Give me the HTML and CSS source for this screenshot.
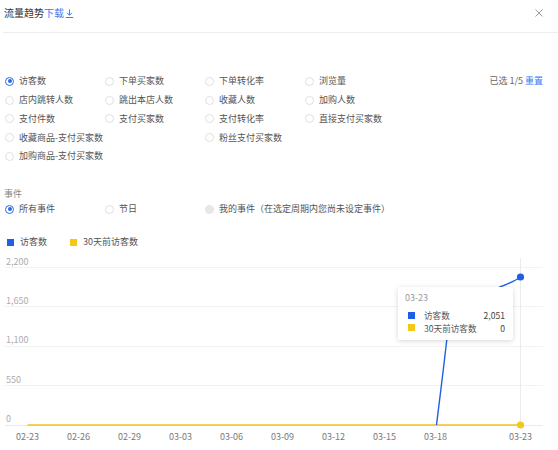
FILE: index.html
```html
<!DOCTYPE html>
<html lang="zh-CN">
<head>
<meta charset="utf-8">
<title>流量趋势</title>
<link rel="stylesheet" href="styles.css">
</head>
<body>
<div class="dialog">
  <header class="head">
    <div class="title">流量趋势<a class="dl">下载<svg class="dl-icon" width="9" height="9" viewBox="0 0 9 9"><path d="M4.5 0.5V6M2 3.8L4.5 6.3L7 3.8M0.8 8.5H8.2" fill="none" stroke="currentColor" stroke-width="1"/></svg></a></div>
    <span class="close"><svg width="8" height="8" viewBox="0 0 8 8"><path d="M0.5 0.5L7.5 7.5M7.5 0.5L0.5 7.5" stroke="#9a9a9a" stroke-width="1"/></svg></span>
  </header>

  <div class="metrics">
    <label class="opt on"><i class="radio"></i>访客数</label>
    <label class="opt"><i class="radio"></i>下单买家数</label>
    <label class="opt"><i class="radio"></i>下单转化率</label>
    <label class="opt"><i class="radio"></i>浏览量</label>
    <div class="picked">已选 1/5 <a class="link">重置</a></div>
    <label class="opt"><i class="radio"></i>店内跳转人数</label>
    <label class="opt"><i class="radio"></i>跳出本店人数</label>
    <label class="opt"><i class="radio"></i>收藏人数</label>
    <label class="opt"><i class="radio"></i>加购人数</label>
    <label class="opt"><i class="radio"></i>支付件数</label>
    <label class="opt"><i class="radio"></i>支付买家数</label>
    <label class="opt"><i class="radio"></i>支付转化率</label>
    <label class="opt"><i class="radio"></i>直接支付买家数</label>
    <label class="opt span2"><i class="radio"></i>收藏商品-支付买家数</label>
    <label class="opt"><i class="radio"></i>粉丝支付买家数</label>
    <label class="opt span2"><i class="radio"></i>加购商品-支付买家数</label>
  </div>

  <div class="ev-label">事件</div>
  <div class="events">
    <label class="opt on"><i class="radio"></i>所有事件</label>
    <label class="opt"><i class="radio"></i>节日</label>
    <label class="opt off wide"><i class="radio"></i>我的事件（在选定周期内您尚未设定事件）</label>
  </div>

  <div class="legend">
    <span class="lg-item"><i class="sw blue"></i>访客数</span>
    <span class="lg-item"><i class="sw yellow"></i>30天前访客数</span>
  </div>

  <div class="chart">
    <svg class="plot" width="558" height="200" viewBox="0 0 558 200">
      <g stroke="#f2f2f4" stroke-width="1">
        <line x1="5" x2="543" y1="17.5" y2="17.5"/>
        <line x1="5" x2="543" y1="56.5" y2="56.5"/>
        <line x1="5" x2="543" y1="96.5" y2="96.5"/>
        <line x1="5" x2="543" y1="135.5" y2="135.5"/>
        <line x1="5" x2="543" y1="175.5" y2="175.5" stroke="#eaeaea"/>
      </g>
      <g class="ylab" fill="#acacac" font-size="9">
        <text x="6" y="14.5">2,200</text>
        <text x="6" y="53.5">1,650</text>
        <text x="6" y="93">1,100</text>
        <text x="6" y="132.5">550</text>
        <text x="6" y="172">0</text>
      </g>
      <line x1="520.5" x2="520.5" y1="8" y2="175" stroke="#ececec" stroke-width="1"/>
      <path d="M27.5 175H520.5" stroke="#f0c31c" stroke-width="1.6" fill="none"/>
      <path d="M436.5 175C442 130 446 100 450 60C470 45 508 37 520.5 27" stroke="#1e5fe4" stroke-width="1.4" fill="none"/>
      <circle cx="520.5" cy="175" r="3.6" fill="#f4c818"/>
      <circle cx="520.5" cy="27" r="3.6" fill="#1e5fe4"/>
      <g class="xlab" fill="#7a7a7a" font-size="9" text-anchor="middle">
        <text x="27.5" y="190">02-23</text>
        <text x="78.5" y="190">02-26</text>
        <text x="129.5" y="190">02-29</text>
        <text x="180.5" y="190">03-03</text>
        <text x="231.5" y="190">03-06</text>
        <text x="282.5" y="190">03-09</text>
        <text x="333.5" y="190">03-12</text>
        <text x="384.5" y="190">03-15</text>
        <text x="435.5" y="190">03-18</text>
        <text x="520.5" y="190">03-23</text>
      </g>
    </svg>
    <div class="tip">
      <div class="tip-date">03-23</div>
      <div class="tip-row first"><i class="sw blue"></i><span class="tip-name">访客数</span><span class="val">2,051</span></div>
      <div class="tip-row"><i class="sw yellow"></i><span class="tip-name">30天前访客数</span><span class="val">0</span></div>
    </div>
  </div>
</div>
</body>
</html>
```
FILE: styles.css
```css
html, body {
  margin: 0;
  padding: 0;
  background: #fff;
}
body {
  font-family: "Noto Sans CJK SC", "Noto Sans", sans-serif;
  font-size: 9px;
  color: #555;
}
.dialog {
  width: 558px;
  height: 450px;
  overflow: hidden;
}
.head {
  height: 33px;
  box-sizing: border-box;
  margin-left: 3px;
  padding: 7px 15px 0 1px;
  border-bottom: 1px solid #ededed;
  display: flex;
  justify-content: space-between;
  align-items: flex-start;
}
.title {
  font-size: 10px;
  line-height: 12px;
  color: #333;
  display: flex;
  align-items: center;
}
.dl {
  color: #3a7cf0;
  display: inline-flex;
  align-items: center;
}
.dl-icon {
  margin-left: 1px;
}
.close {
  display: block;
  margin-top: 2px;
  width: 8px;
  height: 8px;
}
.close svg {
  display: block;
}
.metrics {
  display: grid;
  grid-template-columns: repeat(4, 100px) 1fr;
  grid-auto-rows: 18.75px;
  align-items: center;
  margin: 39px 15px 0 4px;
}
.opt {
  display: flex;
  align-items: center;
  line-height: 12px;
  white-space: nowrap;
  color: #555;
}
.radio {
  display: block;
  flex: none;
  position: relative;
  width: 9px;
  height: 9px;
  box-sizing: border-box;
  border: 1px solid #e0e0e0;
  border-radius: 50%;
  margin: 0 5px 0 1px;
}
.opt.on .radio {
  border-color: #2d6be6;
}
.opt.on .radio::after {
  content: "";
  position: absolute;
  inset: 1.5px;
  border-radius: 50%;
  background: #2d6be6;
}
.opt.off .radio {
  background: #e8e8e8;
  border-color: #e4e4e4;
}
.span2 {
  grid-column: span 2;
}
.picked {
  grid-column: 5;
  grid-row: 1 / span 5;
  align-self: start;
  justify-self: end;
  line-height: 18.75px;
  color: #666;
}
.link {
  color: #3a7cf0;
}
.ev-label {
  margin: 21.75px 0 0 4px;
  line-height: 12px;
  color: #888;
}
.events {
  display: grid;
  grid-template-columns: repeat(4, 100px) 1fr;
  grid-auto-rows: 19px;
  align-items: center;
  margin: 0 15px 0 4px;
}
.events .wide {
  grid-column: span 3;
}
.legend {
  display: flex;
  gap: 23px;
  margin: 17.5px 0 0 7px;
  line-height: 12px;
}
.lg-item {
  display: flex;
  align-items: center;
  color: #555;
}
.sw {
  display: block;
  flex: none;
  width: 7px;
  height: 7px;
  margin-right: 6px;
}
.sw.blue {
  background: #1e5fe4;
}
.sw.yellow {
  background: #f4c818;
}
.chart {
  position: relative;
  margin-top: 2px;
  height: 200px;
}
.plot {
  display: block;
}
.plot text {
  font-family: "Noto Sans CJK SC", "Noto Sans", sans-serif;
}
.tip {
  position: absolute;
  left: 398px;
  top: 37px;
  width: 115px;
  height: 53px;
  box-sizing: border-box;
  padding: 5px 8px 0 7px;
  background: #fff;
  border-radius: 2px;
  box-shadow: 0 1px 5px rgba(0, 0, 0, 0.16);
}
.tip-date {
  line-height: 12px;
  color: #9a9a9a;
}
.tip-row {
  display: flex;
  align-items: center;
  font-size: 8.6px;
  line-height: 12.6px;
  margin-left: 3px;
  color: #555;
}
.tip-row.first {
  margin-top: 5px;
}
.tip-row .sw {
  margin-right: 9px;
}
.val {
  margin-left: auto;
  color: #444;
}
```
